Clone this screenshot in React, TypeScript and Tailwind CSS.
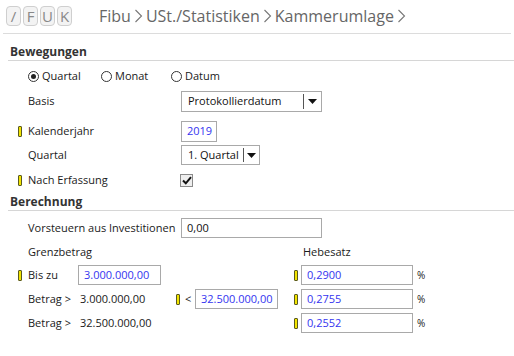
import React from 'react';

const font = { fontFamily: '"Open Sans", "Noto Sans", sans-serif' };

function Marker() {
  return (
    <span className="inline-block w-[4px] h-[11px] rounded-[1px] border border-[#5a5a20] bg-[#f2e400] shrink-0" />
  );
}

function Chevron() {
  return (
    <svg width="9" height="16" viewBox="0 0 9 16" className="mx-[3px] shrink-0">
      <path d="M1.5 2 L7.5 8 L1.5 14" fill="none" stroke="#777" strokeWidth="1.1" />
    </svg>
  );
}

function KeyButton({ label }: { label: string }) {
  return (
    <div className="w-[15px] h-[20px] flex items-center justify-center rounded-[4px] border border-[#cfcfcf] bg-[#f3f3f3] text-[15px] text-[#888] leading-none">
      {label}
    </div>
  );
}

function Radio({ checked, label, width }: { checked?: boolean; label: string; width: string }) {
  return (
    <div className={`flex items-center ${width}`}>
      <span className="w-[11px] h-[11px] rounded-full border border-[#333] flex items-center justify-center shrink-0">
        {checked && <span className="w-[5px] h-[5px] rounded-full bg-[#222]" />}
      </span>
      <span className="ml-[3px]">{label}</span>
    </div>
  );
}

function Select({ value, width, divider }: { value: string; width: string; divider: string }) {
  return (
    <div className={`flex h-full border border-[#a9a9a9] bg-white ${width}`}>
      <div className={`flex items-center pl-[6px] whitespace-nowrap ${divider} text-[#111]`}>{value}</div>
      <div className="flex-1 flex items-center justify-center border-l border-[#555] my-[2px]">
        <svg width="9" height="5" viewBox="0 0 9 5">
          <path d="M0 0 L9 0 L4.5 5 Z" fill="#111" />
        </svg>
      </div>
    </div>
  );
}

function Input({ value, width, blue = true }: { value: string; width: string; blue?: boolean }) {
  return (
    <div
      className={`flex items-center h-full border border-[#a9a9a9] bg-white pl-[5px] whitespace-nowrap ${width} ${
        blue ? 'text-[#3434f0]' : 'text-[#111]'
      }`}
    >
      {value}
    </div>
  );
}

function Label({ text, marker, width }: { text: string; marker?: boolean; width: string }) {
  return (
    <div className={`flex items-center shrink-0 whitespace-nowrap ${width}`}>
      {marker ? <Marker /> : <span className="w-[4px]" />}
      <span className="ml-[6px]">{text}</span>
    </div>
  );
}

function SectionTitle({ title, className }: { title: string; className: string }) {
  return (
    <div className={`h-[17px] ml-[8px] border-b border-[#d6d6d6] flex items-center ${className}`}>
      <span className="pl-[2px] font-bold text-[12px] text-[#333] leading-[16px]">{title}</span>
    </div>
  );
}

function RateCell({ value }: { value: string }) {
  return (
    <div className="flex items-center h-full">
      <Marker />
      <div className="ml-[3px] h-full">
        <Input value={value} width="w-[112px]" />
      </div>
      <span className="ml-[4px] text-[10px]">%</span>
    </div>
  );
}

export default function App() {
  return (
    <div className="w-[514px] h-[356px] bg-white text-[11px] text-[#1a1a1a] overflow-hidden" style={font}>
      <div className="h-[34px] mx-[3px] border-b border-[#dcdcdc] flex items-center pb-[1px]">
        <div className="flex items-center gap-[2px] ml-[3px]">
          <KeyButton label="/" />
          <KeyButton label="F" />
          <KeyButton label="U" />
          <KeyButton label="K" />
        </div>
        <div className="flex items-center ml-[27px] text-[16px] text-[#666] whitespace-nowrap">
          <span>Fibu</span>
          <Chevron />
          <span>USt./Statistiken</span>
          <Chevron />
          <span>Kammerumlage</span>
          <Chevron />
        </div>
      </div>

      <SectionTitle title="Bewegungen" className="mt-[10px]" />

      <div className="flex mt-[7px] h-[16px] pl-[28px]">
        <Radio checked label="Quartal" width="w-[73px]" />
        <Radio label="Monat" width="w-[70px]" />
        <Radio label="Datum" width="w-[70px]" />
      </div>

      <div className="flex mt-[7px] h-[21px] pl-[18px]">
        <Label text="Basis" width="w-[163px]" />
        <Select value="Protokollierdatum" width="w-[141px]" divider="w-[121px]" />
      </div>

      <div className="flex mt-[9px] h-[21px] pl-[18px]">
        <Label text="Kalenderjahr" marker width="w-[163px]" />
        <Input value="2019" width="w-[36px]" />
      </div>

      <div className="flex mt-[3px] h-[20px] pl-[18px]">
        <Label text="Quartal" width="w-[163px]" />
        <Select value="1. Quartal" width="w-[79px]" divider="w-[61px]" />
      </div>

      <div className="flex mt-[7px] h-[16px] pl-[18px] items-center">
        <Label text="Nach Erfassung" marker width="w-[162px]" />
        <span className="w-[13px] h-[13px] border border-[#8a8a8a] bg-[#eeeeee] flex items-center justify-center">
          <svg width="10" height="9" viewBox="0 0 10 9">
            <path d="M1 4.5 L3.8 7.3 L9 1.2" fill="none" stroke="#111" strokeWidth="2" />
          </svg>
        </span>
      </div>

      <SectionTitle title="Berechnung" className="mt-[6px]" />

      <div className="flex mt-[7px] h-[20px] pl-[18px]">
        <Label text="Vorsteuern aus Investitionen" width="w-[163px]" />
        <Input value="0,00" width="w-[141px]" blue={false} />
      </div>

      <div className="flex mt-[6px] h-[16px] pl-[18px] items-center">
        <Label text="Grenzbetrag" width="w-[285px]" />
        <span>Hebesatz</span>
      </div>

      <div className="flex mt-[5px] h-[20px] pl-[18px]">
        <Label text="Bis zu" marker width="w-[60px]" />
        <Input value="3.000.000,00" width="w-[83px]" />
        <div className="w-[133px]" />
        <RateCell value="0,2900" />
      </div>

      <div className="flex mt-[4px] h-[20px] pl-[18px]">
        <Label text="Betrag >" width="w-[60px]" />
        <div className="w-[98px] flex items-center pl-[2px]">3.000.000,00</div>
        <div className="flex items-center w-[19px]">
          <Marker />
          <span className="ml-[5px]">&lt;</span>
        </div>
        <Input value="32.500.000,00" width="w-[83px]" />
        <div className="w-[16px]" />
        <RateCell value="0,2755" />
      </div>

      <div className="flex mt-[4px] h-[20px] pl-[18px]">
        <Label text="Betrag >" width="w-[60px]" />
        <div className="w-[216px] flex items-center pl-[2px]">32.500.000,00</div>
        <RateCell value="0,2552" />
      </div>
    </div>
  );
}
